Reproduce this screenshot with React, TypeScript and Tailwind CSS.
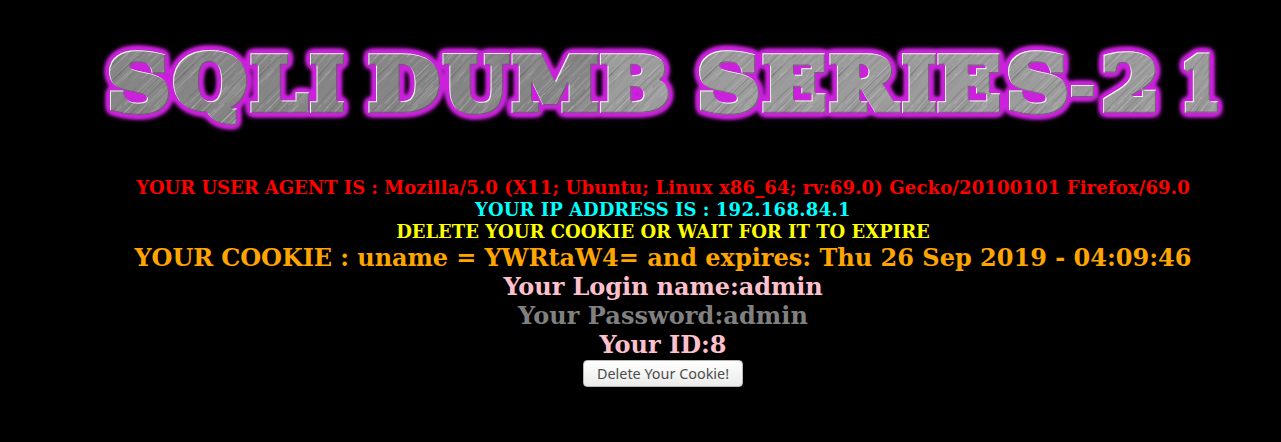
import { useMemo } from "react";

type Glyph = { ch: string; left: number; right: number; top: number; bottom: number };

const g = (ch: string, left: number, right: number, top = 52, bottom = 112.5): Glyph => ({ ch, left, right, top, bottom });

const TITLE: Glyph[] = [
  g("S", 108, 169, 50, 115),
  g("Q", 173, 248, 50, 125),
  g("L", 250, 309.5),
  g("I", 309.5, 344.5),
  g("D", 368, 441),
  g("U", 442, 510, 52, 115),
  g("M", 511.5, 599),
  g("B", 599.5, 669.5),
  g("S", 698, 759, 50, 115),
  g("E", 762, 826),
  g("R", 829, 901),
  g("I", 901.5, 936.5),
  g("E", 937, 1000.5),
  g("S", 1007, 1067.5, 50, 115),
  g("-", 1071, 1094, 85, 97),
  g("2", 1102, 1156, 51, 113),
  g("1", 1184, 1218.5, 52, 113),
];

const SIZE = 74;
const STROKE = 7.5;

function placeGlyphs() {
  const ctx = document.createElement("canvas").getContext("2d")!;
  ctx.font = `bold ${SIZE}px "DejaVu Serif"`;
  return TITLE.map((item) => {
    const m = ctx.measureText(item.ch);
    const stroke = item.ch === "-" ? 2 : STROKE;
    const l = -m.actualBoundingBoxLeft - stroke / 2;
    const r = m.actualBoundingBoxRight + stroke / 2;
    const t = -m.actualBoundingBoxAscent - stroke / 2;
    const b = m.actualBoundingBoxDescent + stroke / 2;
    const sx = (item.right - item.left) / (r - l);
    const sy = (item.bottom - item.top) / (b - t);
    return {
      ch: item.ch,
      stroke,
      transform: `matrix(${sx} 0 0 ${sy} ${item.left - l * sx} ${item.top - t * sy})`,
      light: item.left > 560,
    };
  });
}

function makeScratches() {
  let seed = 17;
  const rnd = () => (seed = (seed * 16807) % 2147483647) / 2147483647;
  return Array.from({ length: 420 }, () => ({
    x: rnd() * 190 - 30,
    y: rnd() * 120,
    w: 14 + rnd() * 46,
    o: 0.12 + rnd() * 0.32,
    dark: rnd() > 0.52,
  }));
}

function Metal({ id, base }: { id: string; base: string }) {
  const lines = useMemo(makeScratches, []);
  return (
    <pattern id={id} width="160" height="120" patternUnits="userSpaceOnUse" patternTransform="rotate(-48)">
      <rect width="160" height="120" fill={base} />
      {lines.map((s, i) => (
        <rect key={i} x={s.x} y={s.y} width={s.w} height="0.7" fill={s.dark ? "#585858" : "#dcdcdc"} opacity={s.o} />
      ))}
    </pattern>
  );
}

function Banner() {
  const glyphs = useMemo(placeGlyphs, []);
  return (
    <svg className="block h-[177px] w-[1281px]" viewBox="0 0 1281 177" role="img" aria-label="SQLI DUMB SERIES-21">
      <defs>
        <Metal id="steel" base="#868686" />
        <Metal id="silver" base="#9c9c9c" />
        <filter id="bevel" x="-10%" y="-10%" width="120%" height="120%" colorInterpolationFilters="sRGB">
          <feOffset in="SourceAlpha" dx="1" dy="1" result="down" />
          <feComposite in="SourceAlpha" in2="down" operator="out" result="edgeLight" />
          <feFlood floodColor="#ffffff" floodOpacity="0.9" />
          <feComposite in2="edgeLight" operator="in" result="light" />
          <feOffset in="SourceAlpha" dx="-1" dy="-1" result="up" />
          <feComposite in="SourceAlpha" in2="up" operator="out" result="edgeDark" />
          <feFlood floodColor="#5a4a5e" floodOpacity="0.7" />
          <feComposite in2="edgeDark" operator="in" result="shade" />
          <feMerge>
            <feMergeNode in="SourceGraphic" />
            <feMergeNode in="shade" />
            <feMergeNode in="light" />
          </feMerge>
        </filter>
        <filter id="glow" filterUnits="userSpaceOnUse" x="80" y="20" width="1180" height="130" colorInterpolationFilters="sRGB">
          <feGaussianBlur in="SourceAlpha" stdDeviation="3.4" />
          <feComponentTransfer result="halo">
            <feFuncA type="linear" slope="8" />
          </feComponentTransfer>
          <feGaussianBlur in="halo" stdDeviation="0.8" result="soft" />
          <feFlood floodColor="#cb20dc" />
          <feComposite in2="soft" operator="in" result="aura" />
          <feMerge>
            <feMergeNode in="aura" />
            <feMergeNode in="SourceGraphic" />
          </feMerge>
        </filter>
      </defs>
      <g filter="url(#glow)">
        {glyphs.map((item, i) => (
          <g key={i} filter="url(#bevel)">
            <text
              transform={item.transform}
              fontFamily="'DejaVu Serif', serif"
              fontWeight="bold"
              fontSize={SIZE}
              fill={item.light ? "url(#silver)" : "url(#steel)"}
              stroke={item.light ? "url(#silver)" : "url(#steel)"}
              strokeWidth={item.stroke}
              strokeLinejoin="miter"
              strokeMiterlimit="1.6"
            >
              {item.ch}
            </text>
          </g>
        ))}
      </g>
    </svg>
  );
}

export default function App() {
  return (
    <main className="h-[442px] w-[1281px] overflow-hidden bg-black font-['DejaVu_Serif',serif] font-bold">
      <Banner />
      <div className="flex flex-col items-center pl-[45px] whitespace-nowrap">
        <div className="flex flex-col items-center text-[18px] leading-[22px]">
          <p className="text-[#ff0000]">
            <span className="tracking-[-0.04px]">YOUR USER AGENT IS : </span>
            <span className="tracking-[0.14px]">Mozilla/5.0 (X11; Ubuntu; Linux x86_64; rv:69.0) Gecko/20100101 Firefox/69.0</span>
          </p>
          <p className="text-[#00ffff]">
            <span className="tracking-[0.03px]">YOUR IP ADDRESS IS : </span>
            <span className="tracking-[0.3px]">192.168.84.1</span>
          </p>
          <p className="text-[#ffff00]">DELETE YOUR COOKIE OR WAIT FOR IT TO EXPIRE</p>
        </div>
        <div className="flex flex-col items-center text-2xl leading-[29px]">
          <p className="text-[#ffa500]">
            <span className="tracking-[-0.1px]">YOUR COOKIE : uname = </span>
            <span>YWRtaW4= and expires: Thu 26 Sep 2019 - 04:09:46</span>
          </p>
          <p className="tracking-[-0.08px] text-[#ffc0cb]">Your Login name:admin</p>
          <p className="tracking-[0.06px] text-[#808080]">Your Password:admin</p>
          <p className="text-[#ffc0cb]">Your ID:8</p>
        </div>
        <button className="mt-[1px] flex h-[27px] w-[160px] items-center justify-center rounded-[4px] border border-[#b6b6b3] bg-linear-to-b from-white to-[#ebebea] font-['Noto_Sans',sans-serif] text-[14.4px] font-normal text-[#4c4c4c]">
          Delete Your Cookie!
        </button>
      </div>
    </main>
  );
}
